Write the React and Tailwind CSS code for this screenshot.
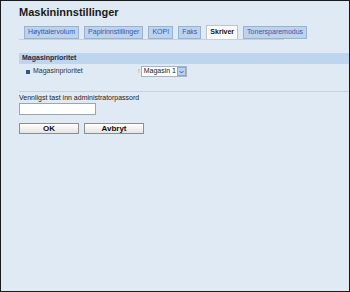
export default function App() {
  const tabs = ['Høyttalervolum', 'Papirinnstillinger', 'KOPI', 'Faks', 'Skriver', 'Tonersparemodus'];
  return (
    <div className="w-[350px] h-[292px] border border-[#1a1a1a] bg-[#e0eaf4] font-['Liberation_Sans',Arial,sans-serif] text-[#222] overflow-hidden">
      {/* Title */}
      <div className="pl-[18px] pt-[3px] text-[11px] leading-[16px] font-bold text-[#1a1a1a]">Maskininnstillinger</div>

      {/* Tabs */}
      <div className="ml-[18px] mt-[5px] w-[265px] border-b border-[#c6d0da] pl-[5px] flex gap-[5px]">
        {tabs.map((t) => (
          <div
            key={t}
            className={
              t === 'Skriver'
                ? 'h-[14px] px-[3px] flex items-center text-[7px] bg-white border border-b-0 border-[#b7c4d2] text-[#111] font-bold'
                : 'h-[13px] mt-[1px] px-[3px] flex items-center text-[7px] bg-[#bcd3ee] border border-[#98b2d2] text-[#3a55a8]'
            }
          >
            {t}
          </div>
        ))}
      </div>

      {/* Section header */}
      <div className="ml-[18px] mt-[13px] h-[11px] bg-[#bdd5ed] flex items-center pl-[3px] text-[7px] font-bold text-[#1a2a44]">
        Magasinprioritet
      </div>

      {/* Row */}
      <div className="ml-[18px] mt-[2px] h-[11px] flex items-center">
        <div className="w-[4px] h-[4px] bg-[#3c4f85] ml-[7px] mr-[3px]"></div>
        <div className="text-[7px] text-[#333] w-[105px]">Magasinprioritet</div>
        <div className="text-[6px] text-[#888] mr-[1px]">!</div>
        <div className="flex items-center h-[11px] bg-white border border-[#a8b4c2]">
          <span className="text-[7px] text-[#222] pl-[2px] pr-[1px]">Magasin 1</span>
          <span className="w-[9px] h-[9px] bg-[#bcd0ee] border border-[#8ea8d0] flex items-center justify-center">
            <svg width="5" height="4" viewBox="0 0 5 4">
              <path d="M0.5 1 L2.5 3 L4.5 1" stroke="#3a55a8" strokeWidth="1" fill="none" />
            </svg>
          </span>
        </div>
      </div>

      {/* Divider */}
      <div className="ml-[18px] mt-[14px] border-t border-[#c8d2dc]"></div>

      {/* Password */}
      <div className="ml-[18px] mt-[1px] text-[7px] leading-[9px] text-[#222]">Vennligst tast inn administratorpassord</div>
      <div className="ml-[18px] mt-[1px] w-[77px] h-[12px] bg-white border border-[#9aa6b2]"></div>

      {/* Buttons */}
      <div className="ml-[18px] mt-[8px] flex gap-[5px]">
        <div className="w-[60px] h-[11px] bg-gradient-to-b from-white to-[#e4e4e4] border border-[#8e8e8e] flex items-center justify-center text-[8px] font-bold text-[#111]">OK</div>
        <div className="w-[60px] h-[11px] bg-gradient-to-b from-white to-[#e4e4e4] border border-[#8e8e8e] flex items-center justify-center text-[8px] font-bold text-[#111]">Avbryt</div>
      </div>
    </div>
  );
}
